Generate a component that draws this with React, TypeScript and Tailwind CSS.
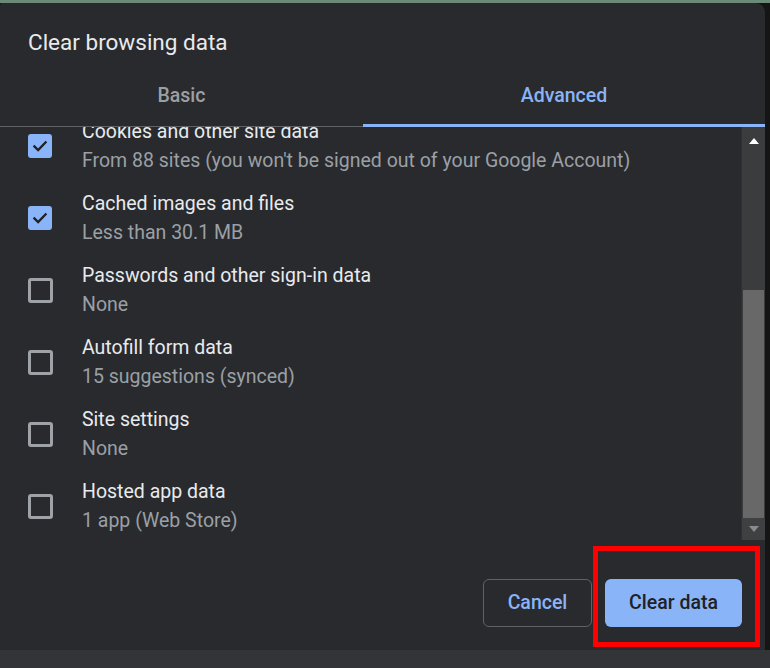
import React from "react";

type Item = { title: string; sub: string; checked: boolean };

const items: Item[] = [
  { title: "Cookies and other site data", sub: "From 88 sites (you won't be signed out of your Google Account)", checked: true },
  { title: "Cached images and files", sub: "Less than 30.1 MB", checked: true },
  { title: "Passwords and other sign-in data", sub: "None", checked: false },
  { title: "Autofill form data", sub: "15 suggestions (synced)", checked: false },
  { title: "Site settings", sub: "None", checked: false },
  { title: "Hosted app data", sub: "1 app (Web Store)", checked: false },
];

function Checkbox({ checked }: { checked: boolean }) {
  if (checked) {
    return (
      <div className="w-[24px] h-[24px] rounded-[3px] bg-[#8ab4f8] flex items-center justify-center shrink-0">
        <svg width="18" height="18" viewBox="0 0 24 24" fill="none">
          <path d="M4.5 12.5l5 5 10-10.5" stroke="#202124" strokeWidth="3" strokeLinecap="square" />
        </svg>
      </div>
    );
  }
  return <div className="w-[25px] h-[25px] rounded-[3px] border-[3px] border-[#9fa2a6] shrink-0" />;
}

export default function App() {
  return (
    <div className="relative w-[770px] h-[668px] overflow-hidden bg-[#151515] flex flex-col font-['Roboto','Liberation_Sans',sans-serif]">
      <div className="h-[3px] bg-[#6c8a78] shrink-0" />
      <div className="flex flex-1 min-h-0">
        <div className="w-[765px] flex flex-col bg-[#292a2d] rounded-tr-[9px] rounded-tl-[3px]">
          <div className="h-[63px] pt-[25px] pl-[28px] shrink-0">
            <div className="h-[28px] leading-[28px] text-[22.5px] text-[#e8eaed]">Clear browsing data</div>
          </div>
          <div className="flex h-[61px] border-b border-[#5f6368] shrink-0">
            <div className="w-[363px] h-[60px] flex items-center justify-center text-[19.5px] font-medium text-[#9aa0a6]">
              Basic
            </div>
            <div className="flex-1 h-[61px] -mb-px border-b-[3px] border-[#8ab4f8] flex items-center justify-center pt-[2px] text-[19.5px] font-medium text-[#8ab4f8]">
              Advanced
            </div>
          </div>
          <div className="flex h-[413px] shrink-0">
            <div className="flex-1 overflow-hidden">
              <div className="-mt-[17px]">
                {items.map((it) => (
                  <div key={it.title} className="h-[72px] flex items-center pl-[28px]">
                    <div className="w-[25px] flex justify-start">
                      <Checkbox checked={it.checked} />
                    </div>
                    <div className="ml-[29px] flex flex-col">
                      <div className="h-[29px] leading-[29px] text-[19.5px] text-[#e8eaed] whitespace-nowrap">{it.title}</div>
                      <div className="h-[29px] leading-[29px] text-[19.5px] text-[#9aa0a6] whitespace-nowrap">{it.sub}</div>
                    </div>
                  </div>
                ))}
              </div>
            </div>
            <div className="w-[24px] flex flex-col bg-[#3b3c3e] border-l border-[#2f3032]">
              <div className="h-[22px] flex items-center justify-center pt-[6px]">
                <svg width="10" height="6" viewBox="0 0 10 6">
                  <path d="M0 6L5 0L10 6Z" fill="#ffffff" />
                </svg>
              </div>
              <div className="h-[141px]" />
              <div className="h-[228px] mx-[1px] bg-[#686868]" />
              <div className="h-[22px] flex items-center justify-center bg-[#3f4042]">
                <svg width="10" height="6" viewBox="0 0 10 6">
                  <path d="M0 0L5 6L10 0Z" fill="#8a8b8d" />
                </svg>
              </div>
            </div>
          </div>
          <div className="flex-1 flex justify-end items-start pt-[39px] pr-[23px] gap-[13px]">
            <button className="w-[109px] h-[48px] rounded-[6px] border border-[#5f6368] text-[19.5px] font-medium text-[#8ab4f8] flex items-center justify-center">
              Cancel
            </button>
            <button className="w-[137px] h-[48px] rounded-[6px] bg-[#8ab4f8] text-[19.5px] font-medium text-[#202124] flex items-center justify-center">
              Clear data
            </button>
          </div>
        </div>
        <div className="flex-1" />
      </div>
      <div className="h-[18px] bg-[#333437] shrink-0" />
      <div className="absolute left-[593px] top-[546px] w-[167px] h-[101px] border-[5px] border-[#ff0000]" />
    </div>
  );
}
